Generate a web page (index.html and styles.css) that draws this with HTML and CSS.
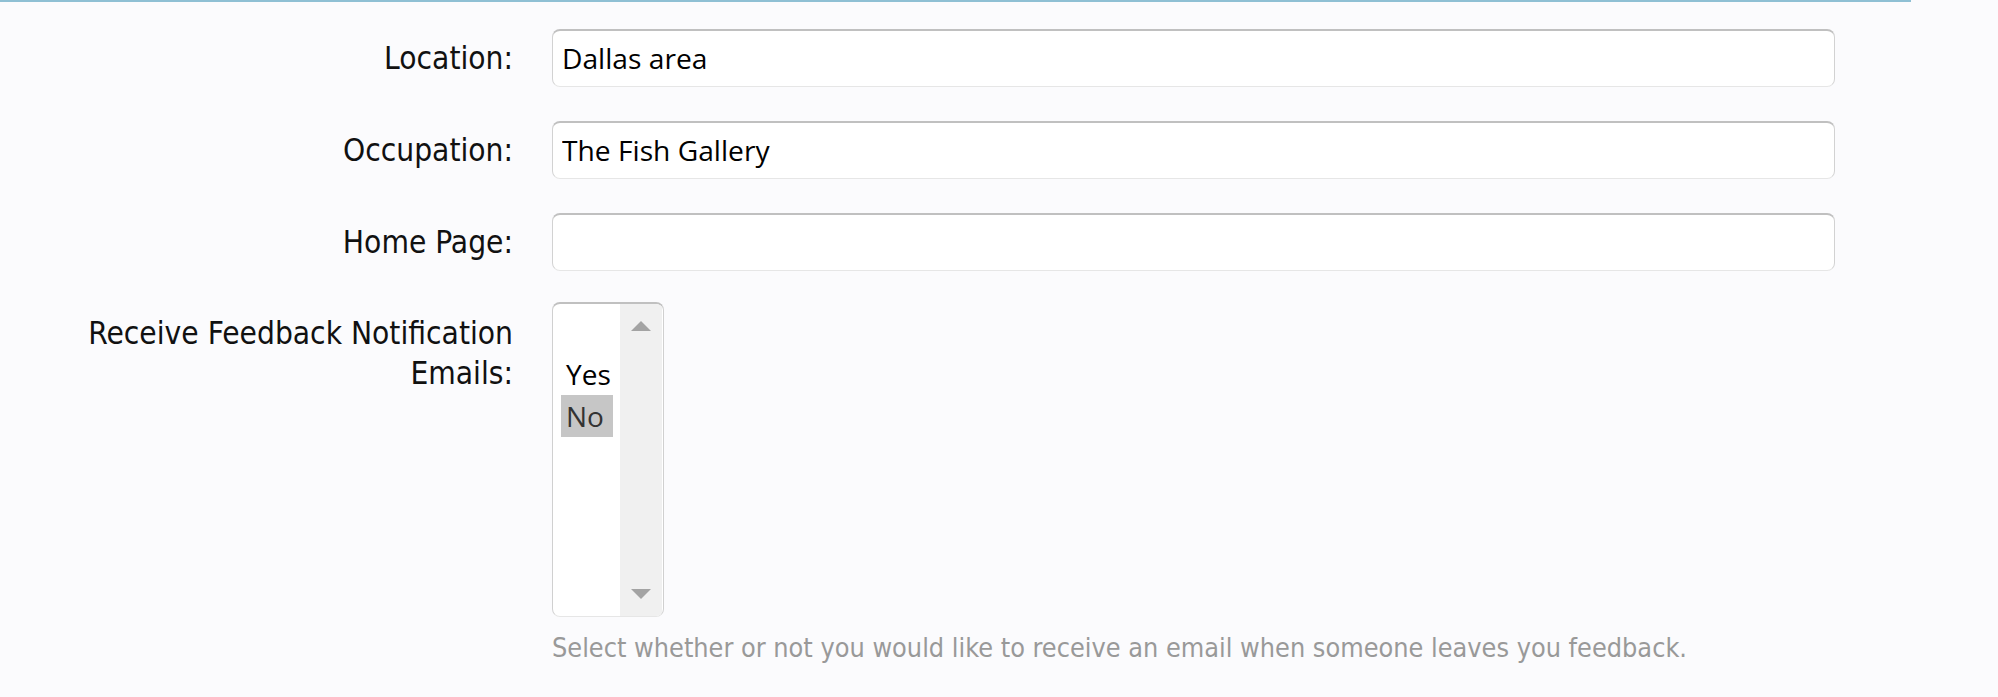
FILE: index.html
```html
<!DOCTYPE html>
<html lang="en">
<head>
    <meta charset="UTF-8">
    <meta name="viewport" content="width=device-width, initial-scale=1.0">
    <title>Edit Profile</title>
    <link rel="stylesheet" href="styles.css">
</head>
<body>
    <div class="topRule"></div>

    <form class="profileForm">
        <div class="formRow">
            <label class="rowLabel" for="location">Location:</label>
            <input class="textInput" type="text" id="location" name="location" value="Dallas area">
        </div>

        <div class="formRow">
            <label class="rowLabel" for="occupation">Occupation:</label>
            <input class="textInput" type="text" id="occupation" name="occupation" value="The Fish Gallery">
        </div>

        <div class="formRow">
            <label class="rowLabel" for="homePage">Home Page:</label>
            <input class="textInput" type="text" id="homePage" name="homePage" value="">
        </div>

        <div class="formRow lastRow">
            <label class="rowLabel" for="feedbackEmails">Receive Feedback Notification Emails:</label>
            <div class="fieldStack">
                <div class="listBox" id="feedbackEmails" role="listbox">
                    <div class="listOptions">
                        <div class="listOption" role="option">&nbsp;</div>
                        <div class="listOption" role="option">Yes</div>
                        <div class="listOption selected" role="option" aria-selected="true">No</div>
                    </div>
                    <div class="scrollTrack">
                        <svg class="scrollArrow" width="20" height="10" viewBox="0 0 20 10"><polygon points="10,0 20,10 0,10" fill="#a3a3a3"/></svg>
                        <svg class="scrollArrow" width="20" height="10" viewBox="0 0 20 10"><polygon points="0,0 20,0 10,10" fill="#a3a3a3"/></svg>
                    </div>
                </div>
                <p class="fieldHint">Select whether or not you would like to receive an email when someone leaves you feedback.</p>
            </div>
        </div>
    </form>
</body>
</html>
```

FILE: styles.css
```css
body {
    margin: 0;
    padding: 0;
    background-color: #fbfbfd;
    font-family: "DejaVu Sans Condensed", "DejaVu Sans", sans-serif;
    color: #111;
}

.topRule {
    width: 1911px;
    height: 2px;
    background-color: #8fc0d4;
}

.profileForm {
    padding: 27px 0 0 73px;
}

.formRow {
    display: grid;
    grid-template-columns: 440px 1283px;
    column-gap: 39px;
    margin-bottom: 34px;
}

.formRow.lastRow {
    margin-top: -3px;
    margin-bottom: 0;
}

.rowLabel {
    text-align: right;
    font-size: 31.4px;
    line-height: 40px;
    padding-top: 9px;
}

.lastRow .rowLabel {
    padding-top: 11px;
}

.textInput {
    box-sizing: border-box;
    width: 1283px;
    height: 58px;
    margin: 0;
    padding: 0 9px 2px;
    border: 1px solid #d2d2d2;
    border-top: 2px solid #c0c0c0;
    border-bottom-color: #e6e6e6;
    border-radius: 8px;
    background-color: #fff;
    font-family: "Open Sans", sans-serif;
    font-size: 28.2px;
    color: #000;
    outline: none;
}

.fieldStack {
    display: flex;
    flex-direction: column;
    align-items: flex-start;
}

.listBox {
    box-sizing: border-box;
    width: 112px;
    height: 315px;
    display: flex;
    border: 1px solid #d0d0d0;
    border-top: 2px solid #c0c0c0;
    border-bottom-color: #e6e6e6;
    border-radius: 8px;
    background-color: #fff;
    overflow: hidden;
}

.listOptions {
    width: 67px;
    padding: 7px 0 0 8px;
    box-sizing: border-box;
}

.listOption {
    width: 52px;
    height: 42px;
    padding-left: 5px;
    box-sizing: border-box;
    font-family: "Open Sans", sans-serif;
    font-size: 28px;
    line-height: 42px;
    color: #000;
}

.listOption.selected {
    background-color: #c6c6c6;
    color: #333;
}

.scrollTrack {
    width: 42px;
    background-color: #f0f0f0;
    display: flex;
    flex-direction: column;
    justify-content: space-between;
    align-items: center;
    padding: 17px 0 17px;
    box-sizing: border-box;
}

.scrollArrow {
    display: block;
}

.fieldHint {
    margin: 15px 0 0;
    font-size: 26.8px;
    line-height: 32px;
    color: #999;
}
```
